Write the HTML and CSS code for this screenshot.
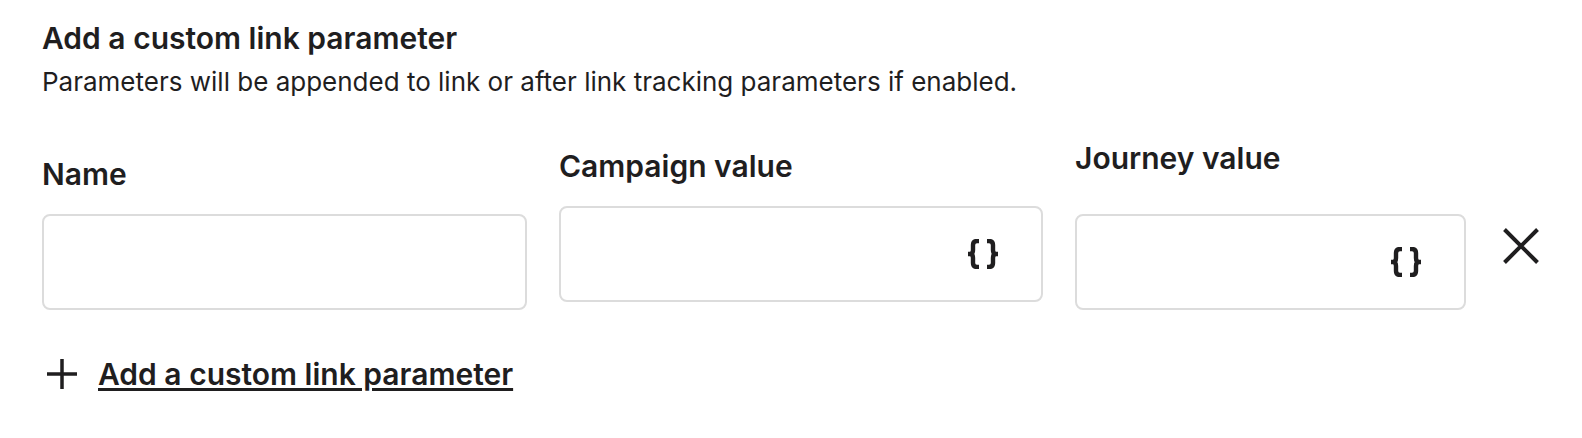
FILE: index.html
```html
<!DOCTYPE html>
<html lang="en">
<head>
<meta charset="utf-8">
<title>Custom link parameters</title>
<link rel="stylesheet" href="styles.css">
</head>
<body>
<main class="panel">
  <h2 class="title">Add a custom link parameter</h2>
  <p class="description">Parameters will be appended to link or after link tracking parameters if enabled.</p>

  <form class="row">
    <div class="field">
      <label class="label" for="name">Name</label>
      <input class="input" id="name" type="text">
    </div>
    <div class="field field-campaign">
      <label class="label" for="campaign">Campaign value</label>
      <div class="control">
        <input class="input" id="campaign" type="text">
        <button class="insert" type="button" aria-label="Insert campaign variable">
          <svg class="braces" viewBox="0 0 30 30" aria-hidden="true"><path d="M11 2H9Q5 2 5 6V11Q5 15 2 15H0M2 15Q5 15 5 19V24Q5 28 9 28H11M19 2H21Q25 2 25 6V11Q25 15 28 15H30M28 15Q25 15 25 19V24Q25 28 21 28H19"/></svg>
        </button>
      </div>
    </div>
    <div class="field field-journey">
      <label class="label" for="journey">Journey value</label>
      <div class="control">
        <input class="input" id="journey" type="text">
        <button class="insert" type="button" aria-label="Insert journey variable">
          <svg class="braces" viewBox="0 0 30 30" aria-hidden="true"><path d="M11 2H9Q5 2 5 6V11Q5 15 2 15H0M2 15Q5 15 5 19V24Q5 28 9 28H11M19 2H21Q25 2 25 6V11Q25 15 28 15H30M28 15Q25 15 25 19V24Q25 28 21 28H19"/></svg>
        </button>
      </div>
    </div>
    <button class="remove" type="button" aria-label="Remove parameter">
      <svg class="cross" viewBox="0 0 36 36" aria-hidden="true"><path d="M1.500 1.500L34.500 34.500M34.500 1.500L1.500 34.500"/></svg>
    </button>
  </form>

  <button class="add" type="button">
    <svg class="plus" viewBox="0 0 30 30" aria-hidden="true"><path d="M15 0V30M0 15H30"/></svg>
    <span class="add-text">Add a custom link parameter</span>
  </button>
</main>
</body>
</html>
```
FILE: styles.css
```css
* {
  box-sizing: border-box;
}

body {
  margin: 0;
  background: #fff;
  color: #1f1e1f;
  font-family: Inter, "Liberation Sans", sans-serif;
}

button {
  padding: 0;
  border: 0;
  background: none;
  color: inherit;
  font: inherit;
  cursor: pointer;
}

svg {
  display: block;
  fill: none;
  stroke: currentColor;
}

.panel {
  padding: 16px 43px 44px 42px;
}

.title,
.label,
.add {
  font-size: 30px;
  font-weight: 600;
  line-height: 44px;
}

.title {
  margin: 0;
}

.description {
  margin: 0;
  font-size: 26px;
  line-height: 44px;
}

.row {
  display: grid;
  grid-template-columns: 485fr 484fr 391fr 41px;
  align-items: center;
  column-gap: 32px;
  margin-top: 32px;
}

.field {
  display: flex;
  flex-direction: column;
  gap: 18px;
}

.field-campaign {
  padding-bottom: 16px;
}

.field-journey {
  gap: 34px;
  padding-bottom: 16px;
}

.control {
  display: grid;
  align-items: center;
}

.control > * {
  grid-area: 1 / 1;
}

.input {
  width: 100%;
  height: 96px;
  padding: 0 24px;
  border: 2px solid #dcdcdc;
  border-radius: 8px;
  background: #fff;
  color: inherit;
  font: inherit;
  font-size: 26px;
}

.insert {
  justify-self: end;
  margin-right: 45px;
}

.braces {
  width: 30px;
  height: 30px;
  stroke-width: 4.4;
}

.remove {
  justify-self: end;
  padding-top: 30px;
}

.cross {
  width: 36px;
  height: 36px;
  stroke-width: 4;
}

.add {
  display: flex;
  align-items: center;
  gap: 21px;
  margin-top: 26px;
  padding-left: 5px;
}

.plus {
  width: 30px;
  height: 30px;
  stroke-width: 3.5;
}

.add-text {
  text-decoration: underline;
  text-decoration-thickness: 3px;
  text-underline-offset: 3px;
}
```
